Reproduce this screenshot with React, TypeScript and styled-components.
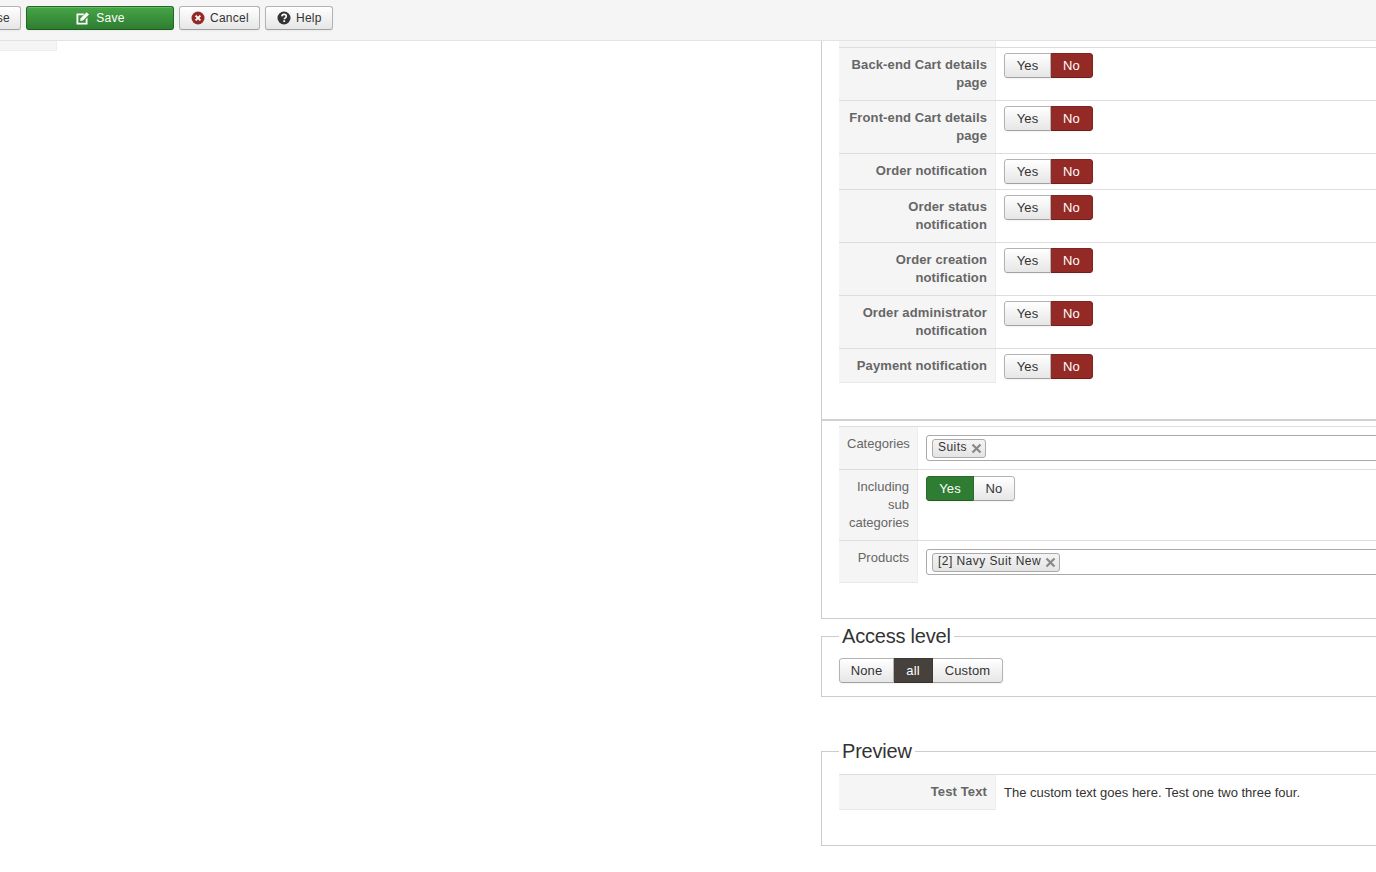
import React from 'react';
import styled, { createGlobalStyle } from 'styled-components';

const Global = createGlobalStyle`
  html, body { margin: 0; padding: 0; height: 100%; background: #fff; overflow: hidden; }
  body { font-family: "Liberation Sans", Arial, sans-serif; font-size: 13px; line-height: 18px; color: #333; }
  * { box-sizing: border-box; }
`;

const Page = styled.div`
  width: 1376px;
  height: 872px;
  overflow: hidden;
`;
const Toolbar = styled.div`
  height: 41px;
  background: #f5f5f5;
  border-bottom: 1px solid #e3e3e3;
  display: flex;
  align-items: flex-start;
  gap: 5px;
  padding: 6px 0 0 0;
  margin-left: -40px;
  width: 1416px;
`;
const ToolButton = styled.div<{ $w: number; $green?: boolean }>`
  width: ${p => p.$w}px;
  height: 24px;
  border-radius: 3px;
  border: 1px solid ${p => (p.$green ? '#1e6b1e' : '#b3b3b3')};
  border-bottom-color: ${p => (p.$green ? '#1c5c1c' : '#a2a2a2')};
  background: ${p => (p.$green ? 'linear-gradient(#46a546, #2f7d32)' : 'linear-gradient(#fff, #e6e6e6)')};
  box-shadow: inset 0 1px 0 rgba(255,255,255,.2), 0 1px 2px rgba(0,0,0,.05);
  color: ${p => (p.$green ? '#fff' : '#333')};
  font-size: 12px;
  letter-spacing: .25px;
  display: flex;
  align-items: center;
  justify-content: ${p => (p.$green ? 'center' : 'flex-start')};
  padding-left: ${p => (p.$green ? 1 : 11)}px;
  gap: ${p => (p.$green ? 6 : 5)}px;
  flex: none;
`;
const ClipLabel = styled.span`
  margin-left: auto;
  padding-right: 10px;
`;
const Main = styled.div`
  display: grid;
  grid-template-columns: 821px 700px;
  height: 831px;
`;
const LeftCol = styled.div``;
const Stub = styled.div`
  width: 57px;
  height: 10px;
  background: #f5f5f5;
  border-right: 1px solid #eee;
  border-bottom: 1px solid #eee;
`;
const RightCol = styled.div`
  display: flex;
  flex-direction: column;
`;
const TopPanel = styled.div`
  border-left: 1px solid #ccc;
  height: 378px;
  padding: 0 0 0 17px;
`;
const Table = styled.div`
  display: flex;
  flex-direction: column;
`;
const Row = styled.div<{ $h: number; $label: number; $firstTop?: boolean }>`
  display: grid;
  grid-template-columns: ${p => p.$label}px 1fr;
  height: ${p => p.$h}px;
  border-top: ${p => (p.$firstTop === false ? 'none' : '1px solid #ddd')};
`;
const Label = styled.div<{ $last?: boolean; $light?: boolean }>`
  background: #f5f5f5;
  border-right: 1px solid #eee;
  border-bottom: ${p => (p.$last ? '1px solid #e8e8e8' : 'none')};
  text-align: right;
  color: #666;
  font-weight: ${p => (p.$light ? 400 : 700)};
  font-size: 13px;
  letter-spacing: ${p => (p.$light ? 0 : 0.12)}px;
  line-height: 18px;
  padding: 8px 8px 0 8px;
`;
const Value = styled.div`
  padding: 5px 8px 0 8px;
  font-size: 13px;
  line-height: 18px;
`;
const GreenValue = styled(Value)`
  padding-top: 6px;
`;
const PlainValue = styled(Value)`
  padding-top: 9px;
  color: #333;
`;
const Toggle = styled.div`
  display: inline-flex;
  height: 25px;
  border-radius: 3px;
  overflow: hidden;
  box-shadow: 0 1px 2px rgba(0,0,0,.05);
  vertical-align: top;
`;
const Opt = styled.div<{ $w: number; $on?: 'red' | 'green' | 'dark' }>`
  width: ${p => p.$w}px;
  font-size: 13px;
  letter-spacing: .1px;
  text-align: center;
  line-height: 23px;
  color: ${p => (p.$on ? '#fff' : '#333')};
  border: 1px solid ${p =>
    p.$on === 'red' ? '#7f2420' : p.$on === 'green' ? '#276a2a' : p.$on === 'dark' ? '#3c3833' : '#b3b3b3'};
  border-bottom-color: ${p =>
    p.$on === 'red' ? '#6f1f1b' : p.$on === 'green' ? '#215c24' : p.$on === 'dark' ? '#35312d' : '#a2a2a2'};
  background: ${p =>
    p.$on === 'red' ? '#942a25' : p.$on === 'green' ? '#2f7d32' : p.$on === 'dark' ? '#46413c' : 'linear-gradient(#fff, #e6e6e6)'};
  &:first-child { border-radius: 3px 0 0 3px; }
  &:last-child { border-radius: 0 3px 3px 0; }
  & + & { border-left: none; }
`;
const ChoiceField = styled.div`
  height: 26px;
  width: 600px;
  border: 1px solid #aaa;
  border-radius: 3px;
  margin-top: 3px;
  padding: 3px 0 0 5px;
`;
const Chip = styled.span`
  display: inline-flex;
  align-items: center;
  height: 19px;
  padding: 0 3px 3px 5px;
  gap: 4px;
  border: 1px solid #aaa;
  border-radius: 3px;
  background: linear-gradient(#f4f4f4, #e4e4e4);
  font-size: 12px;
  line-height: 17px;
  letter-spacing: .45px;
  color: #333;
  vertical-align: top;
`;
const ChipX = styled.svg`
  width: 11px;
  height: 11px;
  margin-top: 2px;
`;
const SecondPanel = styled.div`
  border-left: 1px solid #ccc;
  border-bottom: 1px solid #ccc;
  border-top: 2px solid #d0d0d0;
  height: 200px;
  padding: 5px 0 0 17px;
`;
const Fields = styled.fieldset<{ $top: number; $h: number }>`
  margin: ${p => p.$top}px 0 0;
  height: ${p => p.$h}px;
  min-inline-size: 0;
  border: 1px solid #ccc;
  border-right: none;
  padding: 0 0 0 17px;
`;
const Legend = styled.legend`
  font-size: 20px;
  line-height: 26px;
  letter-spacing: -.2px;
  color: #333;
  padding: 0 3px;
  margin-left: 0;
`;
const LevelWrap = styled.div`
  margin-top: 9px;
`;
const PreviewTable = styled.div`
  margin-top: 10px;
`;

const Save = () => (
  <svg width="14" height="14" viewBox="0 0 14 14" aria-hidden>
    <path d="M0.5 2.5h8L7 4.3H2.3v7.4h7.4V8.4l1.8-1.8v6.9H.5z" fill="#fff" />
    <path d="M4.6 7.2 10.6 1.2 13 3.6 7 9.6 4.2 10z" fill="#fff" />
  </svg>
);
const CancelIcon = () => (
  <svg width="14" height="14" viewBox="0 0 14 14" aria-hidden>
    <circle cx="7" cy="7" r="6.5" fill="#942a25" />
    <path d="M4.6 4.6l4.8 4.8M9.4 4.6l-4.8 4.8" stroke="#fff" strokeWidth="1.8" />
  </svg>
);
const HelpIcon = () => (
  <svg width="14" height="14" viewBox="0 0 14 14" aria-hidden>
    <circle cx="7" cy="7" r="6.5" fill="#333" />
    <path d="M4.9 5.4C5 4 6 3.4 7.1 3.4c1.3 0 2.2.8 2.2 1.9 0 1.6-2 1.6-2 3" fill="none" stroke="#fff" strokeWidth="1.6" />
    <rect x="6.3" y="9.3" width="1.8" height="1.7" fill="#fff" />
  </svg>
);
const X = () => (
  <ChipX viewBox="0 0 11 11" aria-hidden>
    <path d="M1.5 1.5l8 8M9.5 1.5l-8 8" stroke="#888" strokeWidth="2.2" />
  </ChipX>
);

const notif: [string, number][] = [
  ['Back-end Cart details page', 53],
  ['Front-end Cart details page', 53],
  ['Order notification', 36],
  ['Order status notification', 53],
  ['Order creation notification', 53],
  ['Order administrator notification', 53],
  ['Payment notification', 35],
];

const YesNoRed = () => (
  <Toggle>
    <Opt $w={47}>Yes</Opt>
    <Opt $w={42} $on="red">No</Opt>
  </Toggle>
);

export default function App() {
  return (
    <Page>
      <Global />
      <Toolbar>
        <ToolButton $w={61}><ClipLabel>Close</ClipLabel></ToolButton>
        <ToolButton $w={148} $green><Save />Save</ToolButton>
        <ToolButton $w={81}><CancelIcon />Cancel</ToolButton>
        <ToolButton $w={68}><HelpIcon />Help</ToolButton>
      </Toolbar>
      <Main>
        <LeftCol><Stub /></LeftCol>
        <RightCol>
          <TopPanel>
            <Table>
              <Row $h={6} $label={157} $firstTop={false}><Label /><div /></Row>
              {notif.map(([t, h], i) => (
                <Row key={t} $h={h} $label={157}>
                  <Label $last={i === notif.length - 1}>{t}</Label>
                  <Value><YesNoRed /></Value>
                </Row>
              ))}
            </Table>
          </TopPanel>
          <SecondPanel>
            <Table>
              <Row $h={43} $label={79}>
                <Label $light>Categories</Label>
                <Value><ChoiceField><Chip>Suits<X /></Chip></ChoiceField></Value>
              </Row>
              <Row $h={71} $label={79}>
                <Label $light>Including sub categories</Label>
                <GreenValue>
                  <Toggle>
                    <Opt $w={48} $on="green">Yes</Opt>
                    <Opt $w={41}>No</Opt>
                  </Toggle>
                </GreenValue>
              </Row>
              <Row $h={43} $label={79}>
                <Label $light $last>Products</Label>
                <Value><ChoiceField><Chip>[2] Navy Suit New<X /></Chip></ChoiceField></Value>
              </Row>
            </Table>
          </SecondPanel>
          <Fields $top={4} $h={74}>
            <Legend>Access level</Legend>
            <LevelWrap>
              <Toggle>
                <Opt $w={55}>None</Opt>
                <Opt $w={39} $on="dark">all</Opt>
                <Opt $w={70}>Custom</Opt>
              </Toggle>
            </LevelWrap>
          </Fields>
          <Fields $top={41} $h={108}>
            <Legend>Preview</Legend>
            <PreviewTable>
              <Row $h={36} $label={157}>
                <Label $last>Test Text</Label>
                <PlainValue>The custom text goes here. Test one two three four.</PlainValue>
              </Row>
            </PreviewTable>
          </Fields>
        </RightCol>
      </Main>
    </Page>
  );
}
